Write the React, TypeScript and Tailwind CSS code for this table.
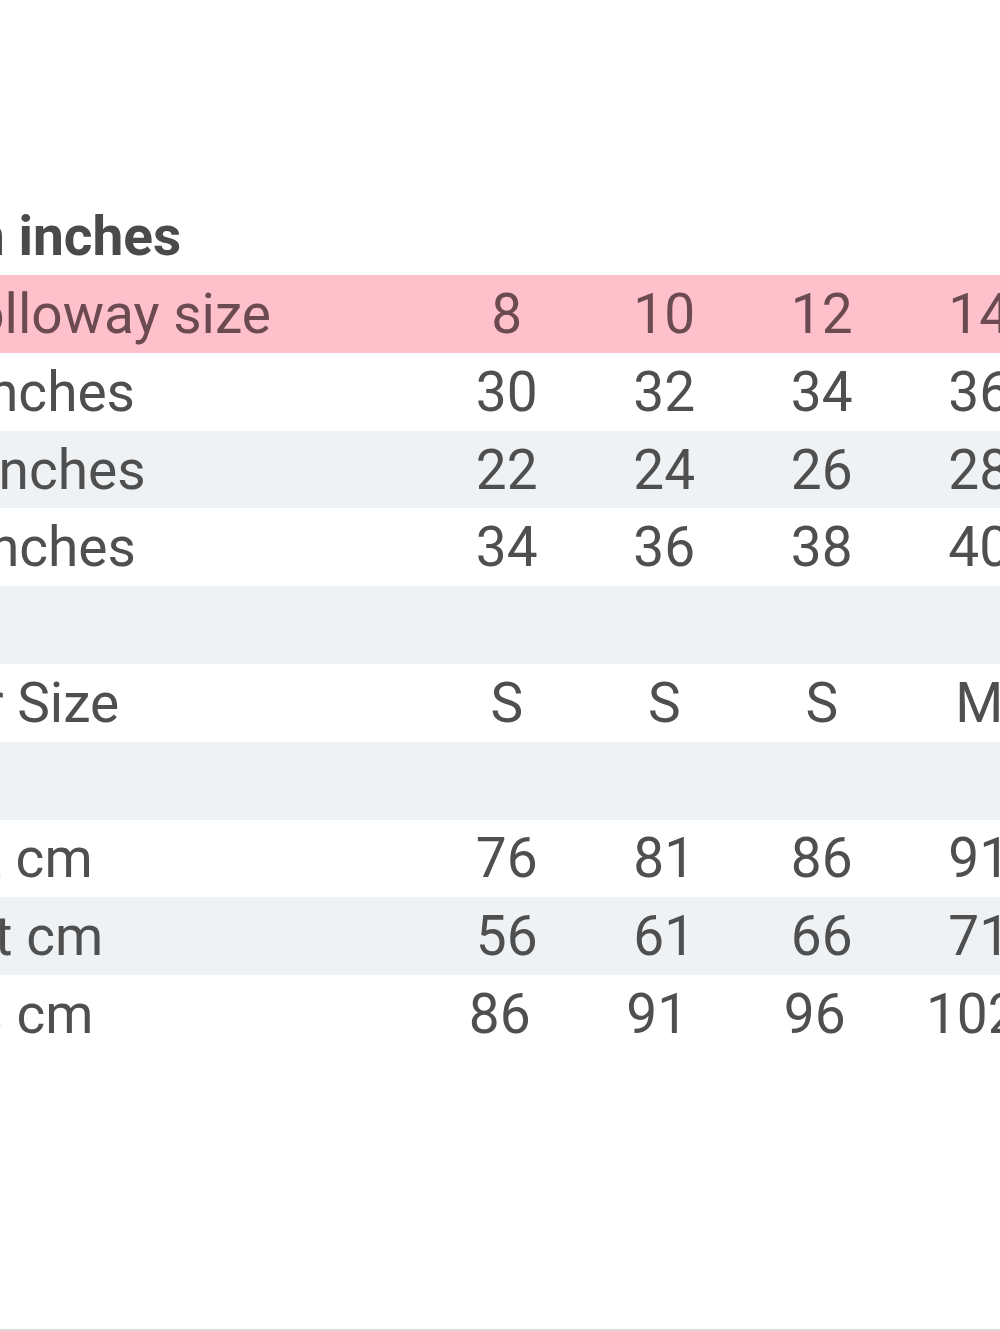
import React from 'react';

type Row = {
  label: string;
  shift: string;
  values: string[];
  bg: string;
  text?: string;
  valueShift?: string;
};

const rows: Row[] = [
  { label: 'Holloway size', shift: '-ml-[66px]', values: ['8', '10', '12', '14', '16'], bg: 'bg-[#fec0ca]', text: 'text-[#6b4a52]' },
  { label: 'Bust inches', shift: '-ml-[150px]', values: ['30', '32', '34', '36', '38'], bg: 'bg-white' },
  { label: 'Waist inches', shift: '-ml-[166px]', values: ['22', '24', '26', '28', '30'], bg: 'bg-[#eff2f4]' },
  { label: 'Hips inches', shift: '-ml-[150px]', values: ['34', '36', '38', '40', '42'], bg: 'bg-white' },
  { label: '', shift: '', values: [], bg: 'bg-[#eff2f4]' },
  { label: 'Letter Size', shift: '-ml-[139px]', values: ['S', 'S', 'S', 'M', 'M'], bg: 'bg-white' },
  { label: '', shift: '', values: [], bg: 'bg-[#eff2f4]' },
  { label: 'Bust cm', shift: '-ml-[109px]', values: ['76', '81', '86', '91', '97'], bg: 'bg-white' },
  { label: 'Waist cm', shift: '-ml-[125px]', values: ['56', '61', '66', '71', '76'], bg: 'bg-[#eff2f4]' },
  { label: 'Hips cm', shift: '-ml-[109px]', values: ['86', '91', '96', '102', '107'], bg: 'bg-white', valueShift: '-ml-[7px]' },
];

export default function App() {
  return (
    <div className="w-[1000px] h-[1331px] overflow-hidden bg-white border-b-2 border-[#dadada] font-['Roboto',sans-serif] text-[55px] text-[#4f4f4f] flex flex-col">
      <div className="h-[197px] shrink-0" />
      <div className="h-[78px] shrink-0 flex items-center leading-[78px]">
        <div className="w-[428px] shrink-0 overflow-hidden whitespace-nowrap">
          <span className="inline-block -ml-[160px] font-bold text-[#4a4a4a]">Size in inches</span>
        </div>
      </div>
      {rows.map((row, i) => (
        <div key={i} className={`h-[77.8px] shrink-0 w-[1200px] flex items-center leading-[78px] ${row.bg} ${row.text ?? ''}`}>
          <div className="w-[428px] shrink-0 overflow-hidden whitespace-nowrap">
            <span className={`inline-block ${row.shift}`}>{row.label}</span>
          </div>
          <div className={`flex ${row.valueShift ?? ''}`}>
            {row.values.map((v, j) => (
              <div key={j} className="w-[157.5px] shrink-0 text-center">{v}</div>
            ))}
          </div>
        </div>
      ))}
    </div>
  );
}
